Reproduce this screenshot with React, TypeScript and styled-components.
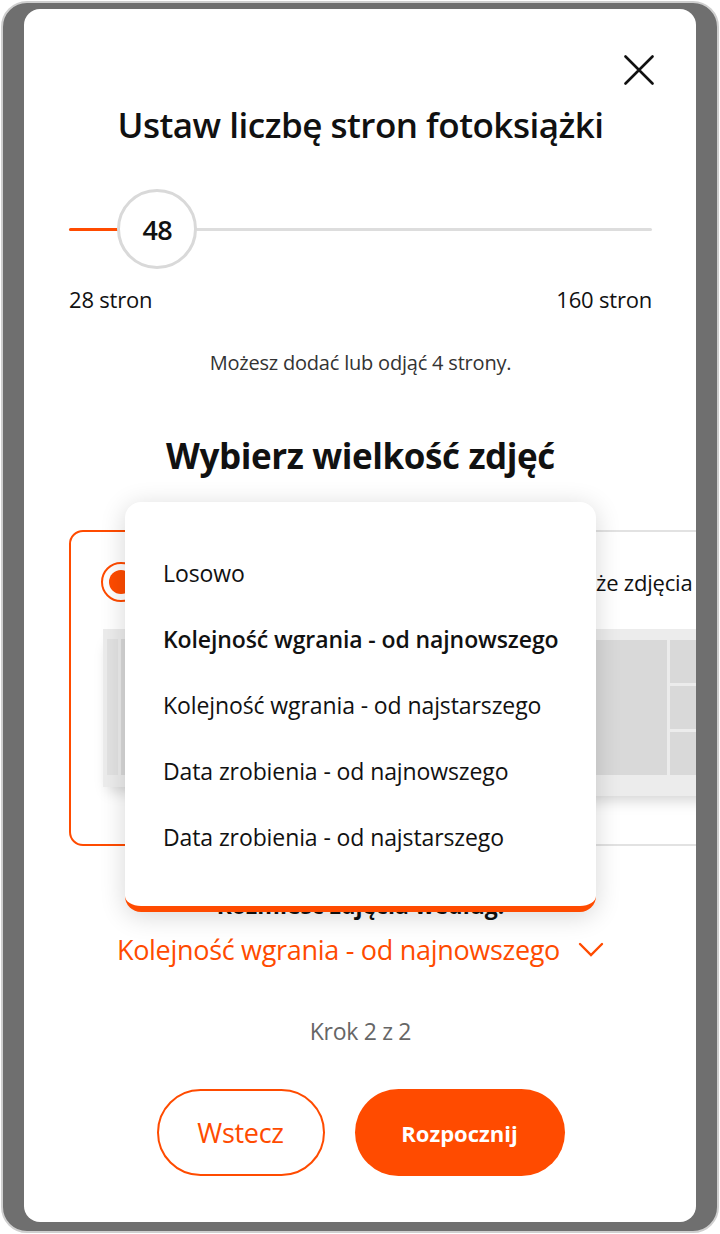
import styled, { createGlobalStyle } from "styled-components"

const ORANGE = "#ff4b00"
const FONT = `"Open Sans", "Noto Sans", sans-serif`

const GlobalStyle = createGlobalStyle`
  html, body {
    margin: 0;
    padding: 0;
    background: #ffffff;
  }
  * {
    box-sizing: border-box;
  }
`

const sortOptions = [
  "Losowo",
  "Kolejność wgrania - od najnowszego",
  "Kolejność wgrania - od najstarszego",
  "Data zrobienia - od najnowszego",
  "Data zrobienia - od najstarszego",
]

export default function App() {
  const selected = 1
  const value = 48
  const min = 28
  const max = 160
  const fill = ((value - min) / (max - min)) * 100

  return (
    <>
      <GlobalStyle />
      <Frame>
        <Modal>
          <CloseRow>
            <CloseButton aria-label="Zamknij">
              <svg width="30" height="30" viewBox="0 0 30 30">
                <path d="M1.5 1.5 L28.5 28.5 M28.5 1.5 L1.5 28.5" stroke="#111" strokeWidth="2.6" strokeLinecap="round" />
              </svg>
            </CloseButton>
          </CloseRow>

          <Title>Ustaw liczbę stron fotoksiążki</Title>

          <Slider>
            <Track>
              <TrackFill style={{ width: `${fill}%` }} />
            </Track>
            <Thumb style={{ left: `${fill}%` }}>{value}</Thumb>
          </Slider>

          <RangeLabels>
            <span>{min} stron</span>
            <span>{max} stron</span>
          </RangeLabels>

          <Hint>Możesz dodać lub odjąć 4 strony.</Hint>

          <Heading>Wybierz wielkość zdjęć</Heading>

          <Carousel>
            <OptionCard $active>
              <OptionHead>
                <Radio $checked />
                <OptionLabel>Małe zdjęcia</OptionLabel>
              </OptionHead>
              <Preview>
                <Spread>
                  <PageEdge />
                  <Cell />
                </Spread>
              </Preview>
            </OptionCard>
            <OptionCard>
              <OptionHead>
                <Radio />
                <OptionLabel>Duże zdjęcia</OptionLabel>
              </OptionHead>
              <Preview $tall>
                <Grid>
                  <Cell $big />
                  <Cell />
                  <Cell />
                  <Cell />
                </Grid>
              </Preview>
            </OptionCard>
          </Carousel>

          <SortLabel>Rozmieść zdjęcia według:</SortLabel>
          <SortSelect>
            <span>{sortOptions[selected]}</span>
            <svg width="26" height="16" viewBox="0 0 26 16">
              <path d="M2 2 L13 13 L24 2" fill="none" stroke={ORANGE} strokeWidth="2.4" strokeLinecap="round" />
            </svg>
          </SortSelect>

          <Step>Krok 2 z 2</Step>

          <Buttons>
            <OutlineButton>Wstecz</OutlineButton>
            <PrimaryButton>Rozpocznij</PrimaryButton>
          </Buttons>

          <Menu>
            {sortOptions.map((o, i) => (
              <MenuItem key={o} $selected={i === selected}>
                {o}
              </MenuItem>
            ))}
          </Menu>
        </Modal>
      </Frame>
    </>
  )
}

const Frame = styled.div`
  margin: 1px;
  height: 1232px;
  border: 2px solid #cfcfcf;
  border-radius: 26px;
  background: #6f6f6f;
  padding: 6px 21px 9px 21px;
  display: flex;
`

const Modal = styled.div`
  position: relative;
  flex: 1;
  background: #ffffff;
  border-radius: 16px;
  overflow: hidden;
  display: flex;
  flex-direction: column;
  align-items: center;
  padding: 0 44px 0 45px;
  font-family: ${FONT};
  color: #111;
`

const CloseRow = styled.div`
  align-self: stretch;
  display: flex;
  justify-content: flex-end;
  padding-top: 46px;
  margin-right: -2px;
`

const CloseButton = styled.button`
  border: none;
  background: none;
  padding: 0;
  width: 30px;
  height: 30px;
  display: flex;
  cursor: pointer;
`

const Title = styled.h1`
  margin: 18px 0 0;
  font-size: 35px;
  line-height: 44px;
  font-weight: 600;
  letter-spacing: -0.5px;
`

const Slider = styled.div`
  position: relative;
  align-self: stretch;
  height: 80px;
  margin-top: 42px;
  display: flex;
  align-items: center;
`

const Track = styled.div`
  position: relative;
  width: 100%;
  height: 3px;
  border-radius: 2px;
  background: #dddddd;
`

const TrackFill = styled.div`
  height: 100%;
  border-radius: 2px;
  background: ${ORANGE};
`

const Thumb = styled.div`
  position: absolute;
  top: 0;
  width: 80px;
  height: 80px;
  transform: translateX(-50%);
  border: 3px solid #d9d9d9;
  border-radius: 50%;
  background: #fff;
  display: flex;
  align-items: center;
  justify-content: center;
  font-size: 27px;
  font-weight: 600;
  letter-spacing: -0.5px;
`

const RangeLabels = styled.div`
  align-self: stretch;
  display: flex;
  justify-content: space-between;
  margin-top: 16px;
  font-size: 22px;
  line-height: 28px;
  letter-spacing: -0.2px;
`

const Hint = styled.p`
  margin: 37px 0 0;
  font-size: 20px;
  line-height: 26px;
  letter-spacing: -0.2px;
  color: #333;
`

const Heading = styled.h2`
  margin: 58px 0 0;
  font-size: 35px;
  line-height: 44px;
  font-weight: 700;
  letter-spacing: -0.4px;
`

const Carousel = styled.div`
  align-self: stretch;
  display: flex;
  gap: 14px;
  margin-top: 52px;
  margin-right: -44px;
`

const OptionCard = styled.div<{ $active?: boolean }>`
  flex: 0 0 400px;
  height: 316px;
  border: 2px solid ${({ $active }) => ($active ? ORANGE : "#e2e2e2")};
  border-radius: 14px;
  padding: 30px 0 0 30px;
  display: flex;
  flex-direction: column;
  overflow: hidden;
`

const OptionHead = styled.div`
  display: flex;
  align-items: center;
  gap: 12px;
`

const Radio = styled.span<{ $checked?: boolean }>`
  width: 40px;
  height: 40px;
  border-radius: 50%;
  border: 2px solid ${({ $checked }) => ($checked ? ORANGE : "#bdbdbd")};
  display: flex;
  align-items: center;
  justify-content: center;
  &::after {
    content: "";
    width: 24px;
    height: 24px;
    border-radius: 50%;
    background: ${({ $checked }) => ($checked ? ORANGE : "transparent")};
  }
`

const OptionLabel = styled.span`
  font-size: 22px;
  letter-spacing: -0.2px;
`

const Preview = styled.div<{ $tall?: boolean }>`
  margin-top: 27px;
  margin-left: 2px;
  margin-right: -2px;
  height: ${({ $tall }) => ($tall ? 167 : 158)}px;
  background: #ececec;
  padding: ${({ $tall }) => ($tall ? "11px 0 21px 4px" : "10px 0 12px 4px")};
  box-shadow: 0 10px 14px -6px rgba(0, 0, 0, 0.18);
`

const Spread = styled.div`
  height: 100%;
  display: flex;
  gap: 3px;
`

const PageEdge = styled.div`
  width: 11px;
  background: #e2e2e2;
`

const Grid = styled.div`
  height: 100%;
  display: grid;
  grid-template-columns: 146px 1fr;
  grid-template-rows: repeat(3, 1fr);
  gap: 3px;
`

const Cell = styled.div<{ $big?: boolean }>`
  flex: 1;
  background: #d9d9d9;
  grid-row: ${({ $big }) => ($big ? "1 / span 3" : "auto")};
`

const SortLabel = styled.div`
  margin-top: 45px;
  font-size: 23px;
  line-height: 28px;
  font-weight: 700;
`

const SortSelect = styled.div`
  display: flex;
  align-items: center;
  gap: 18px;
  margin-top: 14px;
  font-size: 27px;
  line-height: 34px;
  letter-spacing: -0.3px;
  color: ${ORANGE};
  cursor: pointer;
`

const Step = styled.div`
  margin-top: 50px;
  font-size: 23px;
  line-height: 28px;
  letter-spacing: -0.3px;
  color: #666;
`

const Buttons = styled.div`
  display: flex;
  gap: 30px;
  margin-top: 44px;
`

const OutlineButton = styled.button`
  width: 168px;
  height: 87px;
  border: 2px solid ${ORANGE};
  border-radius: 44px;
  background: #fff;
  color: ${ORANGE};
  font-family: ${FONT};
  font-size: 27px;
  letter-spacing: -0.3px;
  cursor: pointer;
`

const PrimaryButton = styled.button`
  width: 210px;
  height: 87px;
  border: none;
  border-radius: 44px;
  background: ${ORANGE};
  color: #fff;
  font-family: ${FONT};
  font-size: 22px;
  font-weight: 700;
  cursor: pointer;
`

const Menu = styled.ul`
  position: absolute;
  top: 493px;
  left: 101px;
  width: 471px;
  margin: 0;
  padding: 38px 0 36px;
  list-style: none;
  background: #fff;
  border-radius: 16px;
  border-bottom: 6px solid ${ORANGE};
  box-shadow: 0 4px 26px rgba(0, 0, 0, 0.16);
`

const MenuItem = styled.li<{ $selected?: boolean }>`
  height: 66px;
  display: flex;
  align-items: center;
  padding-left: 38px;
  font-size: 23px;
  letter-spacing: -0.1px;
  font-weight: ${({ $selected }) => ($selected ? 600 : 400)};
  color: #111;
`
